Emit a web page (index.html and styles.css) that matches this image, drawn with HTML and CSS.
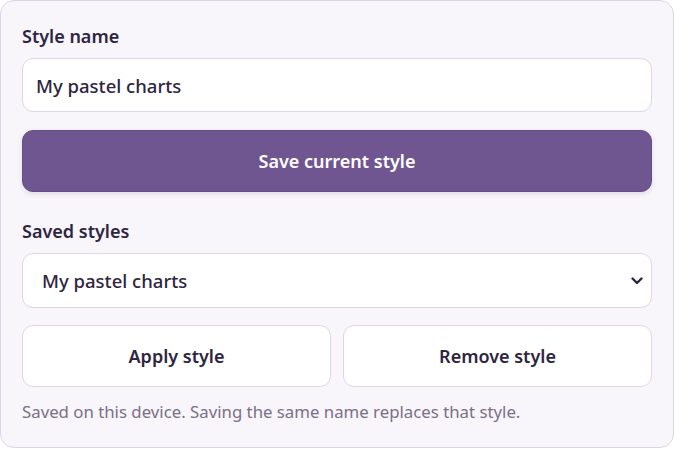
FILE: index.html
```html
<!DOCTYPE html>
<html lang="en">

<head>
    <meta charset="UTF-8">
    <meta name="viewport" content="width=device-width, initial-scale=1.0">
    <title>Chart styles</title>
    <link rel="stylesheet" href="styles.css">
</head>

<body>
    <!-- style manager panel -->
    <div class="style-panel">
        <label class="field-label" for="styleName">Style name</label>
        <input type="text" id="styleName" class="text-input" value="My pastel charts">
        <button type="button" class="primary-btn">Save current style</button>

        <label class="field-label saved-label" for="savedStyles">Saved styles</label>
        <div class="select-wrap">
            <select id="savedStyles" class="style-select">
                <option>My pastel charts</option>
            </select>
            <svg class="select-arrow" width="12" height="8" viewBox="0 0 12 8">
                <path d="M1.5 1.5 L6 6 L10.5 1.5" fill="none" stroke="currentColor" stroke-width="2.4" stroke-linecap="round" stroke-linejoin="round"/>
            </svg>
        </div>

        <div class="btn-row">
            <button type="button" class="outline-btn">Apply style</button>
            <button type="button" class="outline-btn">Remove style</button>
        </div>

        <p class="hint">Saved on this device. Saving the same name replaces that style.</p>
    </div>
</body>

</html>
```

FILE: styles.css
```css
:root {
    --primary-color: #6f5690;
    --panel-bg: #f8f5fb;
    --border-color: #ddd5e8;
    --text-dark: #2e2540;
    --text-muted: #7a7088;
}

* {
    margin: 0;
    padding: 0;
    box-sizing: border-box;
    font-family: 'Noto Sans', 'Open Sans', sans-serif;
}

body {
    background: #ffffff;
}

/* panel */
.style-panel {
    width: 674px;
    display: flex;
    flex-direction: column;
    background: var(--panel-bg);
    border: 1px solid var(--border-color);
    border-radius: 14px;
    padding: 23px 21px 24px;
    color: var(--text-dark);
}

.field-label {
    display: block;
    font-size: 18px;
    line-height: 24px;
    font-weight: 600;
    margin-bottom: 10px;
}

.saved-label {
    margin-top: 27px;
}

.text-input {
    width: 100%;
    height: 54px;
    padding: 0 13px;
    border: 1px solid var(--border-color);
    border-radius: 11px;
    background: white;
    font-size: 18.5px;
    font-weight: 500;
    color: var(--text-dark);
}

.primary-btn {
    margin-top: 18px;
    height: 62px;
    width: 100%;
    border: 1px solid #654d86;
    border-radius: 11px;
    background: var(--primary-color);
    color: white;
    font-size: 18px;
    font-weight: 600;
    box-shadow: 0 2px 5px rgba(60, 40, 90, 0.12);
    cursor: pointer;
}

/* select with custom arrow */
.select-wrap {
    position: relative;
}

.style-select {
    appearance: none;
    -webkit-appearance: none;
    width: 100%;
    height: 55px;
    padding: 0 40px 0 19px;
    border: 1px solid var(--border-color);
    border-radius: 11px;
    background: white;
    font-size: 18.5px;
    font-weight: 500;
    color: var(--text-dark);
}

.select-arrow {
    position: absolute;
    right: 9px;
    top: 24px;
    color: var(--text-dark);
    pointer-events: none;
}

.btn-row {
    margin-top: 17px;
    display: grid;
    grid-template-columns: 1fr 1fr;
    gap: 12px;
}

.outline-btn {
    height: 62px;
    border: 1px solid var(--border-color);
    border-radius: 11px;
    background: white;
    color: var(--text-dark);
    font-size: 18px;
    font-weight: 600;
    cursor: pointer;
}

.hint {
    margin-top: 14px;
    font-size: 16.8px;
    line-height: 22px;
    color: var(--text-muted);
}
```
